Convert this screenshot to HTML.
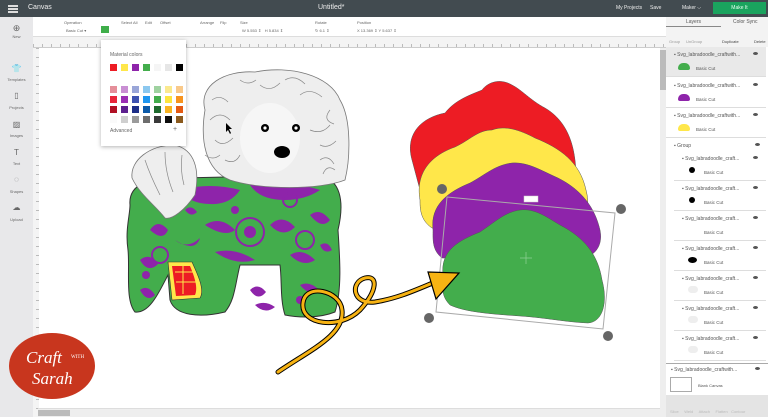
<!DOCTYPE html>
<html><head><meta charset="utf-8"><style>
*{margin:0;padding:0;box-sizing:border-box}
body{width:768px;height:417px;overflow:hidden;font-family:"Liberation Sans",sans-serif;background:#fff;position:relative}
.abs{position:absolute}
.top{left:0;top:0;width:768px;height:17px;background:#424b50;color:#eee;font-size:7px}
.tb{left:0;top:17px;width:666px;height:20px;background:#fff;border-bottom:1px solid #ddd;font-size:4px;color:#666}
.side{left:0;top:17px;width:33px;height:400px;background:#e8e8ea}
.side div{position:absolute;left:0;width:33px;text-align:center;font-size:4px;color:#666}
.ruler{background:#f4f4f4}
.rp{left:666px;top:17px;width:102px;height:400px;background:#f3f3f3;font-size:5px;color:#555}
.row{position:absolute;left:0;width:100px;height:30px;border-bottom:1px solid #ddd}
.row .t{position:absolute;left:8px;top:5px;font-size:5px}
.row .t2{position:absolute;left:30px;top:19px;font-size:4.5px}
.eye{position:absolute;right:8px;top:5px;width:5px;height:3px;background:#555;border-radius:50%}
.sw{position:absolute;width:7px;height:7px}
</style></head><body>
<div class="abs top">
 <div class="abs" style="left:8px;top:5px;width:10px;height:1.5px;background:#ddd;box-shadow:0 3px #ddd,0 6px #ddd"></div>
 <div class="abs" style="left:28px;top:4px">Canvas</div>
 <div class="abs" style="left:318px;top:4px">Untitled*</div>
 <div class="abs" style="left:616px;top:5px;font-size:5px">My Projects</div>
 <div class="abs" style="left:650px;top:5px;font-size:5px">Save</div>
 <div class="abs" style="left:682px;top:5px;font-size:5px">Maker ⌵</div>
 <div class="abs" style="left:713px;top:2px;width:53px;height:12px;background:#1aa35e;color:#e8fff0;font-size:5px;text-align:center;line-height:12px">Make It</div>
</div>
<div class="abs tb">
 <div class="abs" style="left:64px;top:3px">Operation</div><div class="abs" style="left:66px;top:11px">Basic Cut ▾</div>
 <div class="abs" style="left:101px;top:9px;width:8px;height:7px;background:#3fae4a"></div>
 <div class="abs" style="left:121px;top:3px">Select All</div>
 <div class="abs" style="left:145px;top:3px">Edit</div><div class="abs" style="left:160px;top:3px">Offset</div>
 <div class="abs" style="left:200px;top:3px">Arrange</div><div class="abs" style="left:220px;top:3px">Flip</div>
 <div class="abs" style="left:240px;top:3px">Size</div><div class="abs" style="left:242px;top:11px">W 5.553 ⇕ &nbsp; H 5.834 ⇕</div>
 <div class="abs" style="left:315px;top:3px">Rotate</div><div class="abs" style="left:315px;top:11px">↻ 6.1 ⇕</div>
 <div class="abs" style="left:357px;top:3px">Position</div><div class="abs" style="left:357px;top:11px">X 13.369 ⇕ Y 5.637 ⇕</div>
</div>
<div class="abs ruler" style="left:33px;top:37px;width:633px;height:11px;border-bottom:1px solid #ccc;background:repeating-linear-gradient(90deg,#bbb 0 1px,transparent 1px 9px) bottom/100% 3px no-repeat,#f4f4f4"></div>
<div class="abs ruler" style="left:33px;top:48px;width:6px;height:369px;background:repeating-linear-gradient(180deg,#bbb 0 1px,transparent 1px 9px) right/3px 100% no-repeat,#f4f4f4"></div>
<div class="abs side">
 <div style="top:6px;font-size:9px">⊕</div><div style="top:17px">New</div>
 <div style="top:47px;font-size:8px">👕</div><div style="top:60px">Templates</div>
 <div style="top:74px;font-size:8px">▯</div><div style="top:88px">Projects</div>
 <div style="top:103px;font-size:8px">▨</div><div style="top:116px">Images</div>
 <div style="top:131px;font-size:8px">T</div><div style="top:144px">Text</div>
 <div style="top:158px;font-size:8px">◌</div><div style="top:172px">Shapes</div>
 <div style="top:186px;font-size:8px">☁</div><div style="top:200px">Upload</div>
</div>
<div class="abs" style="left:660px;top:48px;width:6px;height:369px;background:#eee"><div style="margin-top:2px;height:40px;background:#bbb"></div></div>
<div class="abs" style="left:38px;top:408px;width:622px;height:9px;background:#eee;border-top:1px solid #ddd"><div style="margin-left:0;width:32px;height:6px;margin-top:1px;background:#bbb"></div></div>

<svg class="abs" style="left:0;top:0" width="768" height="417">
<!-- stacked clouds -->
<path d="M412,160 C405,135 420,118 445,113 C455,100 470,95 482,90 C488,82 500,78 512,85 C522,90 530,100 545,108 C562,118 572,135 575,160 C578,180 570,190 560,190 L420,190 Z" fill="#ed1c24" stroke="#555" stroke-width=".5"/>
<path d="M420,200 C415,172 432,155 455,147 C470,140 478,130 492,130 C505,125 520,130 535,138 C560,148 580,162 586,190 C592,212 582,228 562,228 L432,228 C420,220 420,208 420,200Z" fill="#ffe74a" stroke="#555" stroke-width=".5"/>
<path d="M433,230 C430,205 448,192 470,183 C485,175 495,165 512,163 C528,162 540,170 558,178 C582,190 595,208 600,230 C604,250 590,260 572,260 L442,258 C432,250 433,240 433,230Z" fill="#8e24aa" stroke="#555" stroke-width=".5"/>
<path d="M443,275 C440,250 460,240 480,232 C495,222 505,212 520,210 C535,208 548,218 560,225 C585,238 598,255 602,280 C608,302 603,322 588,323 C565,322 548,318 520,316 C490,314 465,312 450,305 C440,295 443,285 443,275Z" fill="#43ad4c" stroke="#555" stroke-width=".5"/>
<polygon points="447,197 615,213 603,329 436,312" fill="none" stroke="#aaa" stroke-width="1"/>
<rect x="524" y="196" width="14" height="6" fill="#fff" stroke="#ccc" stroke-width=".5"/>
<circle cx="442" cy="189" r="5" fill="#666"/><circle cx="621" cy="209" r="5" fill="#666"/><circle cx="429" cy="318" r="5" fill="#666"/><circle cx="608" cy="336" r="5" fill="#666"/>
<path d="M520,258 h12 M526,252 v12" stroke="#8fd095" stroke-width=".7"/>
<!-- dog body -->
<path d="M130,205 C128,185 150,175 180,178 L320,175 C340,180 345,200 338,230 C340,260 342,290 335,312 C320,318 300,318 285,315 C280,300 282,280 280,265 L240,265 C235,285 235,300 225,312 C200,318 175,316 170,300 L168,275 C160,290 150,314 135,312 C125,300 130,270 128,250 C125,230 130,215 130,205Z" fill="#43ad4c" stroke="#333" stroke-width="1"/>
<g fill="#8e24aa">
<path d="M180,190 q30,-8 60,0 q-10,15 -30,14 q-20,0 -30,-14Z"/><path d="M250,185 q40,-5 70,5 q-15,10 -35,10 q-25,0 -35,-15Z"/>
<circle cx="250" cy="232" r="6"/><path d="M150,230 q8,-12 18,0 q-5,12 -18,0Z"/><path d="M140,260 q10,-8 18,4 q-10,10 -18,-4Z"/>
<path d="M205,225 q15,-10 30,5 q-10,8 -30,-5Z"/><path d="M270,225 q12,-12 25,2 q-12,12 -25,-2Z"/><path d="M310,215 q10,-8 20,5 q-8,10 -20,-5Z"/>
<path d="M175,240 q12,10 25,-2 q-5,15 -25,2Z"/><path d="M215,252 q20,-5 40,8 q-20,6 -40,-8Z"/><path d="M290,255 q12,-8 25,5 q-12,8 -25,-5Z"/>
<path d="M140,290 q8,-6 15,5 q-8,8 -15,-5Z"/><path d="M250,290 q8,-8 16,2 q-8,10 -16,-2Z"/><path d="M300,285 q10,-5 20,6 q-10,6 -20,-6Z"/><path d="M255,305 q10,-5 20,2 q-10,8 -20,-2Z"/><path d="M185,210 q6,-6 12,2 q-6,6 -12,-2Z"/><path d="M320,245 q8,-5 12,5 q-8,5 -12,-5Z"/>
<circle cx="146" cy="275" r="4"/><circle cx="300" cy="300" r="4"/><circle cx="235" cy="210" r="4"/>
</g>
<g stroke="#8e24aa" stroke-width="2" fill="none"><circle cx="250" cy="232" r="14"/><circle cx="305" cy="240" r="9"/><circle cx="160" cy="255" r="8"/><circle cx="290" cy="200" r="7"/></g>
<path d="M168,262 L192,262 C198,275 205,290 200,298 L172,300 Z" fill="#ffe74a" stroke="#333" stroke-width=".6"/>
<path d="M172,266 L190,266 C195,278 198,288 195,295 L176,296Z" fill="#ed1c24"/>
<path d="M175,272 h18 M176,282 h20 M183,266 v28" stroke="#ffe74a" stroke-width="1"/>
<!-- head -->
<path d="M205,110 C198,85 225,70 255,72 C290,65 330,75 340,100 C352,120 350,160 345,180 C320,190 260,190 230,180 C205,170 200,140 205,110Z" fill="#eeeeee" stroke="#777" stroke-width=".8"/>
<g stroke="#888" stroke-width=".7" fill="none"><path d="M210,120 q10,-10 20,0 M215,140 q8,8 18,-2 M300,95 q10,-8 22,2 M310,130 q12,5 20,-5 M320,160 q8,-6 14,4 M225,160 q10,5 15,-5 M260,85 q10,8 20,-2 M330,110 q-8,10 4,14 M212,100 q8,-6 16,2 M320,145 q8,4 16,-4 M205,155 q8,6 15,0 M335,170 q-8,-6 -12,4 M285,80 q10,-6 20,4 M240,80 q8,6 16,0"/></g>
<ellipse cx="270" cy="138" rx="30" ry="35" fill="#f6f6f6"/>
<circle cx="265" cy="128" r="4" fill="#000"/><circle cx="265" cy="128" r="1.6" fill="#fff"/><circle cx="296" cy="128" r="4" fill="#000"/><circle cx="296" cy="128" r="1.6" fill="#fff"/>
<ellipse cx="282" cy="152" rx="8" ry="6" fill="#000"/>
<path d="M132,178 C130,160 150,145 175,145 C195,150 200,170 195,195 C185,210 172,220 165,218 C155,205 140,195 132,178Z" fill="#eee" stroke="#777" stroke-width=".8"/>
<g stroke="#888" stroke-width=".7" fill="none"><path d="M145,160 q5,15 15,35 M165,152 q0,20 8,40 M182,155 q-2,15 2,30"/></g>
<path d="M226,123 l0,9 l2,-2 l2,4 l1,-1 l-2,-4 l3,0Z" fill="#000"/>
<!-- arrow -->
<path d="M278,372 C310,350 345,335 342,310 C340,290 305,283 303,303 C300,325 340,330 360,310 C378,290 378,275 365,278 C350,282 352,305 375,302 C400,298 420,288 440,280" fill="none" stroke="#000" stroke-width="5" stroke-linecap="round"/>
<path d="M278,372 C310,350 345,335 342,310 C340,290 305,283 303,303 C300,325 340,330 360,310 C378,290 378,275 365,278 C350,282 352,305 375,302 C400,298 420,288 440,280" fill="none" stroke="#f7b313" stroke-width="3" stroke-linecap="round"/>
<polygon points="428,272 459,273 436,299" fill="#f7b313" stroke="#000" stroke-width="1.2"/>
<!-- logo -->
<ellipse cx="52" cy="366" rx="43" ry="33" fill="#c8361e"/>
<text x="26" y="363" font-family="Liberation Serif,serif" font-style="italic" font-size="17" fill="#fff">Craft</text>
<text x="71" y="358" font-family="Liberation Serif,serif" font-size="5" fill="#fff">WITH</text>
<text x="32" y="384" font-family="Liberation Serif,serif" font-style="italic" font-size="17" fill="#fff">Sarah</text>
</svg>

<div class="abs" style="left:101px;top:40px;width:85px;height:106px;background:#fff;box-shadow:0 1px 4px rgba(0,0,0,.3);font-size:5px;color:#666">
 <div class="abs" style="left:9px;top:12px">Material colors</div>
 <div class="sw" style="left:9px;top:24px;background:#ed1c24"></div><div class="sw" style="left:20px;top:24px;background:#ffe74a"></div><div class="sw" style="left:31px;top:24px;background:#8e24aa"></div><div class="sw" style="left:42px;top:24px;background:#43ad4c"></div><div class="sw" style="left:53px;top:24px;background:#f5f5f5"></div><div class="sw" style="left:64px;top:24px;background:#e6e6e6"></div><div class="sw" style="left:75px;top:24px;background:#000"></div>
 <div class="abs" style="left:9px;top:46px;width:73px;height:37px;background:
 linear-gradient(90deg,#e58f9a 0 7px,transparent 7px 11px,#c98fd3 11px 18px,transparent 18px 22px,#9aa6d8 22px 29px,transparent 29px 33px,#8cc8ef 33px 40px,transparent 40px 44px,#9fd2a0 44px 51px,transparent 51px 55px,#fbe98e 55px 62px,transparent 62px 66px,#f9c98a 66px 73px) 0 0/100% 7px no-repeat,
 linear-gradient(90deg,#e8263a 0 7px,transparent 7px 11px,#9a2eb4 11px 18px,transparent 18px 22px,#3e52b0 22px 29px,transparent 29px 33px,#1f96ef 33px 40px,transparent 40px 44px,#43ad4c 44px 51px,transparent 51px 55px,#fde53e 55px 62px,transparent 62px 66px,#f7931e 66px 73px) 0 10px/100% 7px no-repeat,
 linear-gradient(90deg,#b01024 0 7px,transparent 7px 11px,#5c1f8e 11px 18px,transparent 18px 22px,#1c2d87 22px 29px,transparent 29px 33px,#0c5aa8 33px 40px,transparent 40px 44px,#1f6a2e 44px 51px,transparent 51px 55px,#f8b420 55px 62px,transparent 62px 66px,#e45a12 66px 73px) 0 20px/100% 7px no-repeat,
 linear-gradient(90deg,#fafafa 0 7px,transparent 7px 11px,#cfcfcf 11px 18px,transparent 18px 22px,#9b9b9b 22px 29px,transparent 29px 33px,#6d6d6d 33px 40px,transparent 40px 44px,#3a3a3a 44px 51px,transparent 51px 55px,#0d0d0d 55px 62px,transparent 62px 66px,#8b5a1d 66px 73px) 0 30px/100% 7px no-repeat"></div>
 <div class="abs" style="left:9px;top:88px">Advanced</div><div class="abs" style="left:72px;top:86px;font-size:7px">+</div>
</div>

<div class="abs rp">
 <div class="abs" style="left:0;top:0;width:102px;height:10px;font-size:5px"><span class="abs" style="left:20px;top:2px">Layers</span><span class="abs" style="left:67px;top:2px">Color Sync</span><div class="abs" style="left:0;top:9px;width:55px;height:1px;background:#888"></div></div>
 <div class="abs" style="left:0;top:10px;width:102px;height:20px;font-size:4px;color:#999"><span class="abs" style="left:3px;top:12px">Group</span><span class="abs" style="left:20px;top:12px">UnGroup</span><span class="abs" style="left:56px;top:12px;color:#444">Duplicate</span><span class="abs" style="left:88px;top:12px;color:#444">Delete</span></div>
 <div class="abs" style="left:0;top:30px;width:102px;height:348px;background:#fff;font-size:5px">
  <div class="row" style="top:0;background:#e9e9e9"><span class="t">▪ Svg_labradoodle_craftwith...</span><i class="eye"></i><div class="abs" style="left:12px;top:16px;width:12px;height:7px;border-radius:5px 5px 2px 2px;background:#43ad4c"></div><span class="t2">Basic Cut</span></div>
  <div class="row" style="top:31px"><span class="t">▪ Svg_labradoodle_craftwith...</span><i class="eye"></i><div class="abs" style="left:12px;top:16px;width:12px;height:7px;border-radius:5px 5px 2px 2px;background:#8e24aa"></div><span class="t2">Basic Cut</span></div>
  <div class="row" style="top:61px"><span class="t">▪ Svg_labradoodle_craftwith...</span><i class="eye"></i><div class="abs" style="left:12px;top:16px;width:12px;height:7px;border-radius:5px 5px 2px 2px;background:#ffe74a"></div><span class="t2">Basic Cut</span></div>
  <div class="abs" style="left:8px;top:96px">▪ Group</div><i class="eye" style="top:96px"></i>
  <div class="row" style="top:104px;left:8px;width:92px"><span class="t">▪ Svg_labradoodle_craft...</span><i class="eye"></i><div class="abs" style="left:15px;top:16px;width:6px;height:6px;border-radius:50%;background:#000"></div><span class="t2">Basic Cut</span></div>
  <div class="row" style="top:134px;left:8px;width:92px"><span class="t">▪ Svg_labradoodle_craft...</span><i class="eye"></i><div class="abs" style="left:15px;top:16px;width:6px;height:6px;border-radius:50%;background:#000"></div><span class="t2">Basic Cut</span></div>
  <div class="row" style="top:164px;left:8px;width:92px"><span class="t">▪ Svg_labradoodle_craft...</span><i class="eye"></i><span class="t2">Basic Cut</span></div>
  <div class="row" style="top:194px;left:8px;width:92px"><span class="t">▪ Svg_labradoodle_craft...</span><i class="eye"></i><div class="abs" style="left:14px;top:16px;width:9px;height:6px;border-radius:50%;background:#000"></div><span class="t2">Basic Cut</span></div>
  <div class="row" style="top:224px;left:8px;width:92px"><span class="t">▪ Svg_labradoodle_craft...</span><i class="eye"></i><div class="abs" style="left:14px;top:15px;width:10px;height:7px;border-radius:4px;background:#eee"></div><span class="t2">Basic Cut</span></div>
  <div class="row" style="top:254px;left:8px;width:92px"><span class="t">▪ Svg_labradoodle_craft...</span><i class="eye"></i><div class="abs" style="left:14px;top:15px;width:10px;height:7px;border-radius:4px;background:#eee"></div><span class="t2">Basic Cut</span></div>
  <div class="row" style="top:284px;left:8px;width:92px"><span class="t">▪ Svg_labradoodle_craft...</span><i class="eye"></i><div class="abs" style="left:14px;top:15px;width:10px;height:7px;border-radius:4px;background:#eee"></div><span class="t2">Basic Cut</span></div>
  <div class="abs" style="left:0;top:316px;width:102px;height:1px;background:#aaa"></div>
  <div class="abs" style="left:5px;top:320px">▪ Svg_labradoodle_craftwith...</div><i class="eye" style="top:320px"></i>
  <div class="abs" style="left:4px;top:330px;width:22px;height:15px;border:1px solid #aaa;background:#fff"></div><div class="abs" style="left:32px;top:336px;font-size:4px">Blank Canvas</div>
 </div>
 <div class="abs" style="left:0;top:378px;width:102px;height:22px;background:#e4e4e4;font-size:4px;color:#bbb"><span class="abs" style="left:4px;top:14px">Slice &nbsp; &nbsp; Weld &nbsp; &nbsp; Attach &nbsp; &nbsp; Flatten &nbsp; Contour</span></div>
</div>
</body></html>
